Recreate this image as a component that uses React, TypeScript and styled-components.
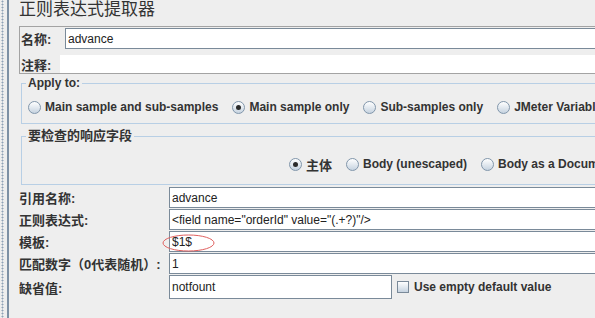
import React from "react";
import styled, { createGlobalStyle } from "styled-components";

const GlobalStyle = createGlobalStyle`
  html, body {
    margin: 0;
    padding: 0;
    background: #eeeeee;
    overflow: hidden;
  }
  body {
    font-family: "Liberation Sans", "Noto Sans CJK SC", sans-serif;
    color: #333333;
  }
`;

const Page = styled.div`
  display: flex;
  width: 700px;
  height: 318px;
  background: #eeeeee;
`;

const Gutter = styled.div`
  flex: none;
  width: 7px;
  background-image: radial-gradient(circle, #8fa2b6 0.8px, transparent 1.2px);
  background-size: 3px 3px;
  background-repeat: repeat-y;
  background-position: 1px 0;
  border-right: 2px solid #7d90a4;
`;

const Panel = styled.div`
  flex: 1;
  padding-left: 10px;
  display: flex;
  flex-direction: column;
`;

const Title = styled.div`
  height: 26px;
  font-size: 17px;
  line-height: 20px;
  color: #333333;
`;

const NameBox = styled.div`
  border: 1px solid #a3a3a3;
  border-right: none;
  padding-top: 1px;
`;

const NameRow = styled.div`
  display: flex;
  align-items: center;
  height: 21px;
`;

const CommentRow = styled.div`
  display: flex;
  align-items: center;
  height: 18px;
  margin-top: 6px;
`;

const BoxLabel = styled.span<{ $width: number }>`
  flex: none;
  width: ${(p) => p.$width}px;
  padding-left: 1px;
  box-sizing: border-box;
  font-size: 13px;
  font-weight: bold;
  color: #333333;
`;

const CommentArea = styled.div`
  flex: 1;
  align-self: stretch;
  background: #ffffff;
`;

const TextField = styled.input<{ $width?: number }>`
  box-sizing: border-box;
  flex: ${(p) => (p.$width ? "none" : "1")};
  width: ${(p) => (p.$width ? `${p.$width}px` : "auto")};
  min-width: 0;
  height: 100%;
  margin: 0;
  padding: 0 0 0 2px;
  border: 1px solid #7a8a99;
  background: #ffffff;
  font-family: "Liberation Sans", sans-serif;
  font-size: 12px;
  color: #222222;
  outline: none;
`;

const Group = styled.fieldset<{ $top: number; $padTop: number; $padBottom: number }>`
  margin: ${(p) => p.$top}px 0 0 2px;
  padding: ${(p) => p.$padTop}px 0 ${(p) => p.$padBottom}px 0;
  border: 1px solid #b8cfe5;
  border-right: none;
  min-width: 0;
`;

const Legend = styled.legend`
  margin-left: 4px;
  padding: 0 2px;
  font-size: 12px;
  line-height: 14px;
  font-weight: bold;
  color: #333333;
  font-family: "Liberation Sans", "Noto Sans CJK SC", sans-serif;
`;

const CjkLegend = styled(Legend)`
  font-size: 13px;
`;

const RadioRow = styled.div<{ $indent: number }>`
  display: flex;
  align-items: center;
  gap: 14px;
  height: 20px;
  padding-left: ${(p) => p.$indent}px;
  white-space: nowrap;
`;

const Option = styled.label`
  display: flex;
  align-items: center;
  gap: 4px;
  font-size: 12px;
  font-weight: bold;
  color: #333333;
`;

const CjkText = styled.span`
  font-size: 13px;
`;

const RadioDot = styled.span<{ $checked?: boolean }>`
  position: relative;
  flex: none;
  width: 13px;
  height: 13px;
  box-sizing: border-box;
  border-radius: 50%;
  border: 1px solid #8196ab;
  background: linear-gradient(#ffffff, #c6d3e0);

  &::after {
    content: "";
    display: ${(p) => (p.$checked ? "block" : "none")};
    position: absolute;
    left: 3px;
    top: 3px;
    width: 5px;
    height: 5px;
    border-radius: 50%;
    background: #2b2b2b;
  }
`;

const Form = styled.div`
  margin-top: 2px;
  display: grid;
  grid-template-columns: 150px 1fr;
  grid-auto-rows: 21px;
  row-gap: 1px;
`;

const FormLabel = styled.div<{ $tall?: boolean }>`
  display: flex;
  align-items: center;
  height: ${(p) => (p.$tall ? 24 : 21)}px;
  font-size: 13px;
  font-weight: bold;
  color: #333333;
  white-space: nowrap;
`;

const FieldCell = styled.div<{ $tall?: boolean }>`
  position: relative;
  display: flex;
  align-items: center;
  gap: 5px;
  height: ${(p) => (p.$tall ? 24 : 21)}px;
`;

const Mark = styled.svg`
  position: absolute;
  left: -7px;
  top: 3px;
  pointer-events: none;
`;

const CheckBox = styled.span`
  flex: none;
  width: 12px;
  height: 12px;
  box-sizing: border-box;
  border: 1px solid #7a8a99;
  background: linear-gradient(#ffffff, #c6d3e0);
`;

const CheckText = styled.span`
  font-size: 12px;
  font-weight: bold;
  color: #333333;
  white-space: nowrap;
`;

const App: React.FC = () => {
  return (
    <Page>
      <GlobalStyle />
      <Gutter />
      <Panel>
        <Title>正则表达式提取器</Title>
        <NameBox>
          <NameRow>
            <BoxLabel $width={45}>名称:</BoxLabel>
            <TextField readOnly value="advance" />
          </NameRow>
          <CommentRow>
            <BoxLabel $width={40}>注释:</BoxLabel>
            <CommentArea />
          </CommentRow>
        </NameBox>

        <Group $top={2} $padTop={7} $padBottom={6}>
          <Legend>Apply to:</Legend>
          <RadioRow $indent={6}>
            <Option>
              <RadioDot />
              Main sample and sub-samples
            </Option>
            <Option>
              <RadioDot $checked />
              Main sample only
            </Option>
            <Option>
              <RadioDot />
              Sub-samples only
            </Option>
            <Option>
              <RadioDot />
              JMeter Variable
            </Option>
          </RadioRow>
        </Group>

        <Group $top={5} $padTop={11} $padBottom={10}>
          <CjkLegend>要检查的响应字段</CjkLegend>
          <RadioRow $indent={267}>
            <Option>
              <RadioDot $checked />
              <CjkText>主体</CjkText>
            </Option>
            <Option>
              <RadioDot />
              Body (unescaped)
            </Option>
            <Option>
              <RadioDot />
              Body as a Document
            </Option>
          </RadioRow>
        </Group>

        <Form>
          <FormLabel>引用名称:</FormLabel>
          <FieldCell>
            <TextField readOnly value="advance" />
          </FieldCell>

          <FormLabel>正则表达式:</FormLabel>
          <FieldCell>
            <TextField readOnly value={'<field name="orderId" value="(.+?)"/>'} />
          </FieldCell>

          <FormLabel>模板:</FormLabel>
          <FieldCell>
            <TextField readOnly value="$1$" />
            <Mark width="53" height="18" viewBox="0 0 53 18">
              <ellipse cx="26.5" cy="9" rx="25.5" ry="8" fill="none" stroke="#e0605f" strokeWidth="1" />
            </Mark>
          </FieldCell>

          <FormLabel>匹配数字（0代表随机）:</FormLabel>
          <FieldCell>
            <TextField readOnly value="1" />
          </FieldCell>

          <FormLabel $tall>缺省值:</FormLabel>
          <FieldCell $tall>
            <TextField readOnly value="notfount" $width={223} />
            <CheckBox />
            <CheckText>Use empty default value</CheckText>
          </FieldCell>
        </Form>
      </Panel>
    </Page>
  );
};

export default App;
